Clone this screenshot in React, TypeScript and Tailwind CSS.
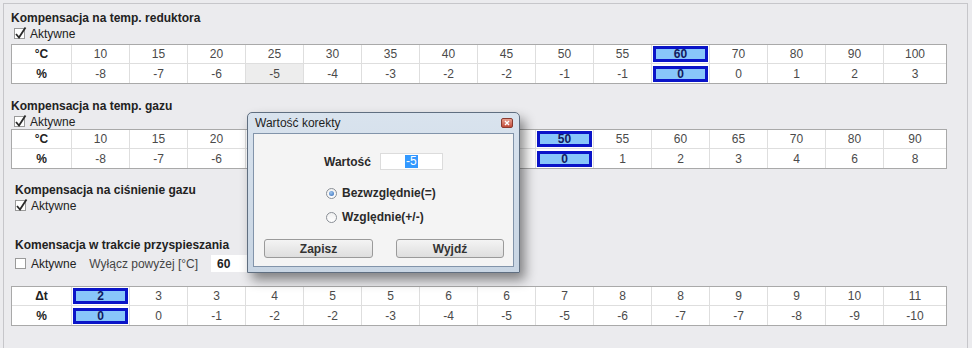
import React from 'react';

type Cell = { v: string; hl?: boolean; sel?: boolean };

const cols = 'grid grid-cols-[59px_repeat(14,58px)_1fr]';

const CheckBox: React.FC<{ checked?: boolean }> = ({ checked }) => (
  <span className="relative inline-block w-[11px] h-[11px] border border-[#9a9a9a] bg-white shrink-0">
    {checked && (
      <svg className="absolute -left-[1px] -top-[3px]" width="13" height="14" viewBox="0 0 13 14">
        <path d="M2 8 L5 11.5 L11.5 1.5" stroke="#2a2a2a" strokeWidth="1.8" fill="none" />
      </svg>
    )}
  </span>
);

const Row: React.FC<{ head: string; cells: Cell[]; last?: boolean }> = ({ head, cells, last }) => (
  <div className={`${cols} h-[19px] ${last ? '' : 'border-b border-[#dedede]'}`}>
    <div className="flex items-center justify-center font-bold text-[#222]">{head}</div>
    {cells.map((c, i) => (
      <div
        key={i}
        className={`border-l border-[#dedede] flex items-center justify-center ${c.sel ? 'bg-[#ededed]' : ''}`}
      >
        {c.hl ? (
          <div className="w-[55px] h-[16px] border-[3px] border-[#0a14c8] bg-[#88c6fa] flex items-center justify-center font-bold text-[#101a60] leading-none">
            {c.v}
          </div>
        ) : (
          <span className="text-[#4a4a4a]">{c.v}</span>
        )}
      </div>
    ))}
  </div>
);

const Table: React.FC<{ head: [string, string]; top: string[]; bottom: string[]; hl: number; sel?: number }> = ({
  head,
  top,
  bottom,
  hl,
  sel,
}) => (
  <div className="w-[936px] border border-[#a9a9a9] bg-white">
    <Row head={head[0]} cells={top.map((v, i) => ({ v, hl: i === hl }))} />
    <Row head={head[1]} cells={bottom.map((v, i) => ({ v, hl: i === hl, sel: i === sel }))} last />
  </div>
);

const Radio: React.FC<{ on?: boolean; label: string }> = ({ on, label }) => (
  <div className="flex items-center gap-[5px] h-[14px]">
    <span className="w-[11px] h-[11px] rounded-full border border-[#8a8f96] bg-[linear-gradient(to_bottom,#f0f0f0,#ffffff)] flex items-center justify-center">
      {on && <span className="w-[5px] h-[5px] rounded-full bg-[radial-gradient(circle_at_40%_35%,#9fc6ee,#2f68b8)]" />}
    </span>
    <span className="font-bold text-[#2a2a2a]">{label}</span>
  </div>
);

const Dialog: React.FC = () => (
  <div className="absolute left-[247px] top-[112px] w-[273px] h-[161px] rounded-t-[5px] border border-[#5f6e80] bg-[linear-gradient(to_bottom,#d9e3ee,#c8d5e3)] shadow-[5px_7px_12px_rgba(0,0,0,0.45)] px-[5px] pb-[5px] flex flex-col">
    <div className="h-[20px] flex items-center justify-between pl-[2px] pr-[1px]">
      <span className="text-[#1e1e1e]">Wartość korekty</span>
      <span className="w-[12px] h-[10px] rounded-[2px] border border-[#8a3b30] bg-[linear-gradient(to_bottom,#e8a090,#c24b3a)] flex items-center justify-center">
        <svg width="6" height="6" viewBox="0 0 6 6">
          <path d="M1 1 L5 5 M5 1 L1 5" stroke="#fff" strokeWidth="1.4" />
        </svg>
      </span>
    </div>
    <div className="flex-1 border border-[#8294aa] bg-[#f4f4f4] flex flex-col">
      <div className="flex items-center gap-[9px] pl-[70px] mt-[19px] h-[17px]">
        <span className="font-bold text-[#2a2a2a]">Wartość</span>
        <div className="w-[63px] h-[17px] bg-white border border-[#dcdcdc] flex items-center justify-center">
          <span className="bg-[#3399ff] text-white px-[1px] leading-[13px]">-5</span>
        </div>
      </div>
      <div className="pl-[72px] mt-[16px]">
        <Radio on label="Bezwzględnie(=)" />
      </div>
      <div className="pl-[72px] mt-[10px]">
        <Radio label="Względnie(+/-)" />
      </div>
      <div className="flex gap-[23px] pl-[10px] mt-[15px]">
        <button className="w-[109px] h-[19px] rounded-[3px] border border-[#9a9a9a] bg-[linear-gradient(to_bottom,#f4f4f4,#dedede)] font-bold text-[#333]">
          Zapisz
        </button>
        <button className="w-[108px] h-[19px] rounded-[3px] border border-[#9a9a9a] bg-[linear-gradient(to_bottom,#f4f4f4,#dedede)] font-bold text-[#333]">
          Wyjdź
        </button>
      </div>
    </div>
  </div>
);

export default function App() {
  return (
    <div className="relative w-[972px] h-[348px] overflow-hidden bg-[#ebebee] font-['Liberation_Sans',Arial,sans-serif] text-[12px] text-[#222]">
      <div className="ml-[3px] mt-[3px] w-[965px] h-[350px] border border-[#c6c6ca] pl-[7px] pt-[7px]">
        {/* temp. reduktora */}
        <div className="h-[15px] leading-[15px] font-bold">Kompensacja na temp. reduktora</div>
        <div className="h-[15px] flex items-center gap-[5px] pl-[3px]">
          <CheckBox checked />
          <span>Aktywne</span>
        </div>
        <div className="mt-[3px]">
          <Table
            head={['°C', '%']}
            top={['10', '15', '20', '25', '30', '35', '40', '45', '50', '55', '60', '70', '80', '90', '100']}
            bottom={['-8', '-7', '-6', '-5', '-4', '-3', '-2', '-2', '-1', '-1', '0', '0', '1', '2', '3']}
            hl={10}
            sel={3}
          />
        </div>

        {/* temp. gazu - columns under the dialog are left blank */}
        <div className="mt-[15px] h-[15px] leading-[15px] font-bold">Kompensacja na temp. gazu</div>
        <div className="h-[15px] flex items-center gap-[5px] pl-[3px]">
          <CheckBox checked />
          <span>Aktywne</span>
        </div>
        <Table
          head={['°C', '%']}
          top={['10', '15', '20', '', '', '', '', '', '50', '55', '60', '65', '70', '80', '90']}
          bottom={['-8', '-7', '-6', '', '', '', '', '', '0', '1', '2', '3', '4', '6', '8']}
          hl={8}
        />

        {/* ciśnienie gazu */}
        <div className="pl-[4px]">
          <div className="mt-[14px] h-[15px] leading-[15px] font-bold">Kompensacja na ciśnienie gazu</div>
          <div className="h-[15px] flex items-center gap-[5px]">
            <CheckBox checked />
            <span>Aktywne</span>
          </div>

          {/* przyspieszanie */}
          <div className="mt-[25px] h-[15px] leading-[15px] font-bold">Komensacja w trakcie przyspieszania</div>
          <div className="mt-[2px] h-[17px] flex items-center">
            <CheckBox />
            <span className="ml-[5px]">Aktywne</span>
            <span className="ml-[13px] text-[#444]">Wyłącz powyżej [°C]</span>
            <div className="ml-[13px] w-[80px] h-[17px] bg-white flex items-center pl-[6px] font-bold">60</div>
          </div>
        </div>

        <div className="mt-[14px]">
          <Table
            head={['Δt', '%']}
            top={['2', '3', '3', '4', '5', '5', '6', '6', '7', '8', '8', '9', '9', '10', '11']}
            bottom={['0', '0', '-1', '-2', '-2', '-3', '-4', '-5', '-5', '-6', '-7', '-7', '-8', '-9', '-10']}
            hl={0}
          />
        </div>
      </div>
      <Dialog />
    </div>
  );
}
